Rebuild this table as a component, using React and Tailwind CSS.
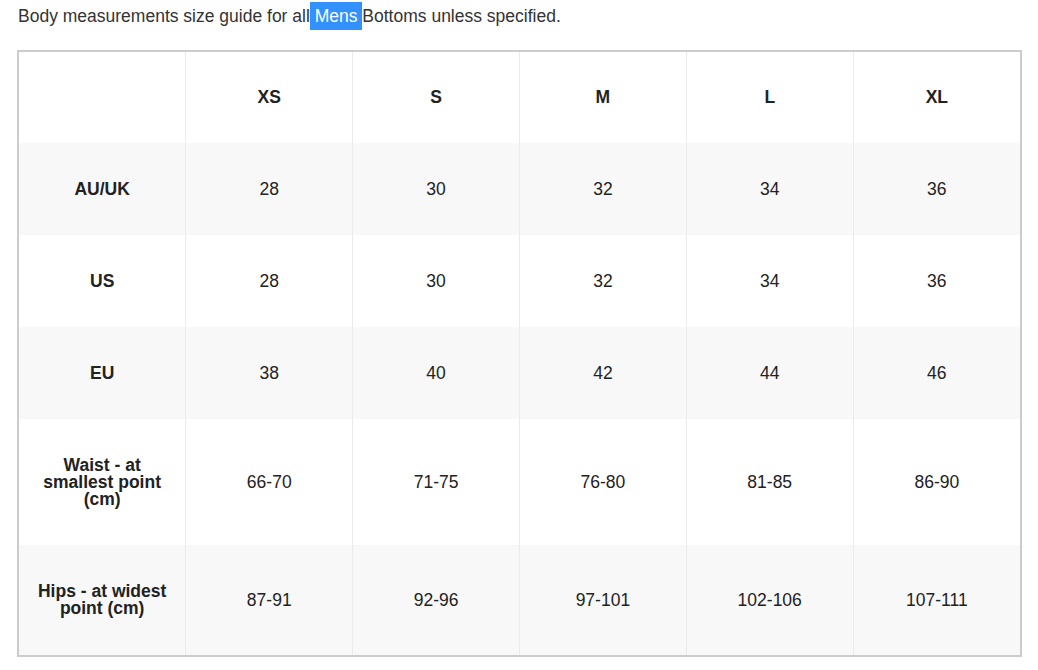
const sizes = ["XS", "S", "M", "L", "XL"];

const rows = [
  { label: ["AU/UK"], values: ["28", "30", "32", "34", "36"], h: "h-[92px]", shade: true },
  { label: ["US"], values: ["28", "30", "32", "34", "36"], h: "h-[92px]", shade: false },
  { label: ["EU"], values: ["38", "40", "42", "44", "46"], h: "h-[92px]", shade: true },
  {
    label: ["Waist - at", "smallest point", "(cm)"],
    values: ["66-70", "71-75", "76-80", "81-85", "86-90"],
    h: "h-[126px]",
    shade: false,
  },
  {
    label: ["Hips - at widest", "point (cm)"],
    values: ["87-91", "92-96", "97-101", "102-106", "107-111"],
    h: "h-[110px]",
    shade: true,
  },
];

export default function App() {
  return (
    <div
      className="w-[1038px] h-[670px] bg-white text-[#222] overflow-hidden"
      style={{ fontFamily: '"Liberation Sans", Arial, sans-serif' }}
    >
      <p className="pl-[18px] pt-[4px] text-[17.5px] leading-[24px] text-[#333]">
        Body measurements size guide for all{" "}
        <span className="bg-[#3390ff] text-white px-[5px] py-[4px] -mx-[5px]">Mens</span> Bottoms unless specified.
      </p>

      <div className="ml-[17px] mt-[22px] w-[1005px] border-2 border-[#cccccc]">
        <table className="w-full table-fixed border-collapse text-[17.5px]">
          <thead>
            <tr className="bg-white h-[91px]">
              <th className="border-r border-[#ebebeb]" />
              {sizes.map((s, i) => (
                <th
                  key={s}
                  className={`font-bold text-center align-middle ${i < 4 ? "border-r border-[#ebebeb]" : ""}`}
                >
                  {s}
                </th>
              ))}
            </tr>
          </thead>
          <tbody>
            {rows.map((row, r) => (
              <tr key={r} className={`${row.h} ${row.shade ? "bg-[#f8f8f8]" : "bg-white"}`}>
                <td className="border-r border-[#ebebeb] text-center align-middle font-bold leading-[17px] px-2">
                  {row.label.map((l) => (
                    <div key={l}>{l}</div>
                  ))}
                </td>
                {row.values.map((v, i) => (
                  <td
                    key={i}
                    className={`text-center align-middle ${i < 4 ? "border-r border-[#ebebeb]" : ""}`}
                  >
                    {v}
                  </td>
                ))}
              </tr>
            ))}
          </tbody>
        </table>
      </div>
    </div>
  );
}
